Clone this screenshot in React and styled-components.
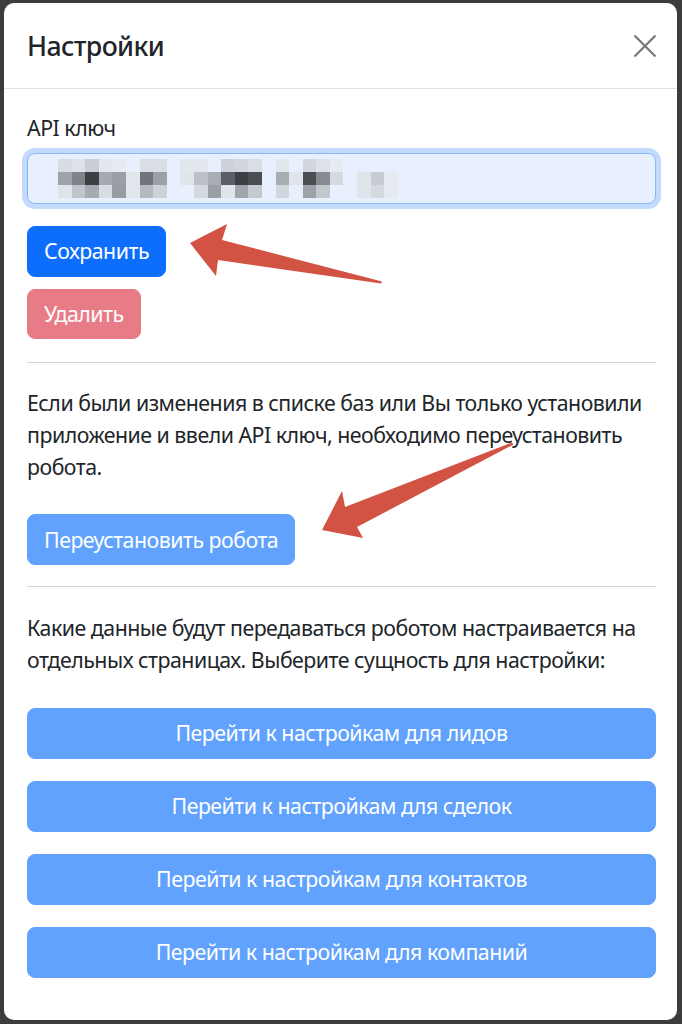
import React from 'react';
import styled, { createGlobalStyle } from 'styled-components';

const GlobalStyle = createGlobalStyle`
  html, body {
    margin: 0;
    padding: 0;
    background-color: #3c3c3c;
  }
  body {
    font-family: "Noto Sans", "Open Sans", sans-serif;
    color: #212529;
    letter-spacing: -0.5px;
  }
  * {
    box-sizing: border-box;
  }
`;

const Page = styled.div`
  position: relative;
  width: 682px;
  min-height: 1024px;
  padding: 3px 5px 4px 4px;
`;

const ModalContent = styled.div`
  background-color: white;
  border-radius: 10px;
  overflow: hidden;
`;

const ModalHeader = styled.div`
  display: flex;
  flex-direction: row;
  align-items: center;
  justify-content: space-between;
  padding: 23px 20px 22px 23px;
  border-bottom: 1px solid #dee2e6;
`;

const ModalTitle = styled.h5`
  margin: 0;
  font-size: 26.67px;
  line-height: 40px;
  font-weight: 500;
  letter-spacing: -0.6px;
`;

const CloseButton = styled.button`
  display: flex;
  align-items: center;
  justify-content: center;
  width: 24px;
  height: 24px;
  padding: 0;
  border: none;
  background: transparent;
  cursor: pointer;
`;

const ModalBody = styled.div`
  padding: 23px 21px 42.5px 23px;
`;

const Label = styled.label`
  display: block;
  font-size: 21.33px;
  line-height: 32px;
  margin-bottom: 9px;
`;

const KeyInput = styled.div`
  display: flex;
  align-items: center;
  height: 51px;
  padding-left: 30px;
  border: 1px solid #86b7fe;
  border-radius: 8px;
  background-color: #e8f0fe;
  box-shadow: 0 0 0 5px #c3dafd;
`;

const Mosaic = styled.div`
  display: flex;
  flex-direction: row;
`;

const MosaicColumn = styled.div`
  display: flex;
  flex-direction: column;
`;

const MosaicCell = styled.div`
  width: 13.6px;
  height: 13px;
  background-color: ${p => p.$shade || 'transparent'};
`;

const Button = styled.button`
  display: ${p => (p.$block ? 'flex' : 'inline-flex')};
  width: ${p => (p.$block ? '100%' : 'auto')};
  align-items: center;
  justify-content: center;
  height: 50.67px;
  padding: 0 16px;
  margin-top: ${p => p.$mt || 0}px;
  border: 1px solid ${p => p.$bg};
  border-radius: 8px;
  background-color: ${p => p.$bg};
  color: white;
  font-family: inherit;
  font-size: 21.33px;
  line-height: 32px;
  letter-spacing: -0.5px;
  cursor: pointer;
`;

const ButtonColumn = styled.div`
  display: flex;
  flex-direction: column;
  align-items: flex-start;
`;

const Divider = styled.div`
  height: 1px;
  margin-top: ${p => p.$mt}px;
  background-color: #d3d4d5;
`;

const Text = styled.p`
  margin: ${p => p.$mt}px 0 0 0;
  font-size: 21.33px;
  line-height: 32px;
`;

const EntityList = styled.div`
  display: flex;
  flex-direction: column;
  gap: 22.33px;
  margin-top: 31.5px;
`;

const Annotations = styled.svg`
  position: absolute;
  top: 0;
  left: 0;
  width: 682px;
  height: 1024px;
  pointer-events: none;
`;

// censored key, three rows of pixel blocks per column
const keyPixels = [
  ['#d8dde5', '#9ea3aa', '#dfe4ea'],
  ['#dde2ea', '#7f848a', '#c0c5cc'],
  ['#c9ced6', '#3c3f44', '#a6abb2'],
  ['#e2e7ee', '#a5aab0', '#d8dde4'],
  ['#e6ebf2', '#9a9fa5', '#979ca2'],
  [null, '#e2e7ee', '#e2e7ee'],
  ['#d9dee5', '#70757b', '#b5bac1'],
  ['#d9dee5', '#9ca1a7', '#cdd2d9'],
  [null, null, null],
  ['#e2e7ee', '#e0e5ec', null],
  ['#e2e7ee', '#bcc1c8', '#d5dae1'],
  [null, '#a9aeb5', '#9aa0a6'],
  ['#cdd2d9', '#5b5f65', '#e0e5ec'],
  ['#d2d7de', '#3c4045', '#a0a5ac'],
  ['#d9dee5', '#4a4e53', '#c5cad1'],
  [null, null, null],
  ['#e2e7ee', '#a8adb4', '#d2d7de'],
  [null, '#e0e5ec', null],
  ['#d2d7de', '#4a4e53', '#9da2a9'],
  ['#dde2e9', '#868b91', '#c3c8cf'],
  ['#e6ebf2', '#d5dae1', null],
  [null, null, null],
  [null, '#dfe4eb', '#e0e5ec'],
  [null, '#c7ccd3', '#d5dae1'],
  [null, '#e6ebf2', '#e6ebf2'],
];

const entities = ['лидов', 'сделок', 'контактов', 'компаний'];

const App = () => {
  return (
    <Page>
      <GlobalStyle />
      <ModalContent>
        <ModalHeader>
          <ModalTitle>Настройки</ModalTitle>
          <CloseButton aria-label="Закрыть">
            <svg width="24" height="24" viewBox="0 0 24 24">
              <path d="M1.5 1.5 L22.5 22.5 M22.5 1.5 L1.5 22.5" stroke="#777" strokeWidth="2.2" />
            </svg>
          </CloseButton>
        </ModalHeader>

        <ModalBody>
          <Label>API ключ</Label>
          <KeyInput>
            <Mosaic>
              {keyPixels.map((col, i) => (
                <MosaicColumn key={i}>
                  {col.map((shade, j) => (
                    <MosaicCell key={j} $shade={shade} />
                  ))}
                </MosaicColumn>
              ))}
            </Mosaic>
          </KeyInput>

          <ButtonColumn>
            <Button $bg="#0d6efd" $mt={22}>Сохранить</Button>
            <Button $bg="#e77c86" $mt={12}>Удалить</Button>
          </ButtonColumn>

          <Divider $mt={22.5} />
          <Text $mt={24}>
            Если были изменения в списке баз или Вы только установили приложение и ввели API ключ, необходимо переустановить робота.
          </Text>
          <ButtonColumn>
            <Button $bg="#61a2fe" $mt={31.5}>Переустановить робота</Button>
          </ButtonColumn>

          <Divider $mt={21.5} />
          <Text $mt={25}>
            Какие данные будут передаваться роботом настраивается на отдельных страницах. Выберите сущность для настройки:
          </Text>
          <EntityList>
            {entities.map(name => (
              <Button key={name} $bg="#61a2fe" $block>
                Перейти к настройкам для {name}
              </Button>
            ))}
          </EntityList>
        </ModalBody>
      </ModalContent>

      <Annotations viewBox="0 0 682 1024">
        <polygon
          points="190,243 227,224 222,240 382,281.5 381,283.5 218,260 216,276"
          fill="#d25244"
        />
        <polygon
          points="322,530 342,491 345,507 512,442.5 513.5,444.5 357,527 363,538"
          fill="#d25244"
        />
      </Annotations>
    </Page>
  );
};

export default App;
